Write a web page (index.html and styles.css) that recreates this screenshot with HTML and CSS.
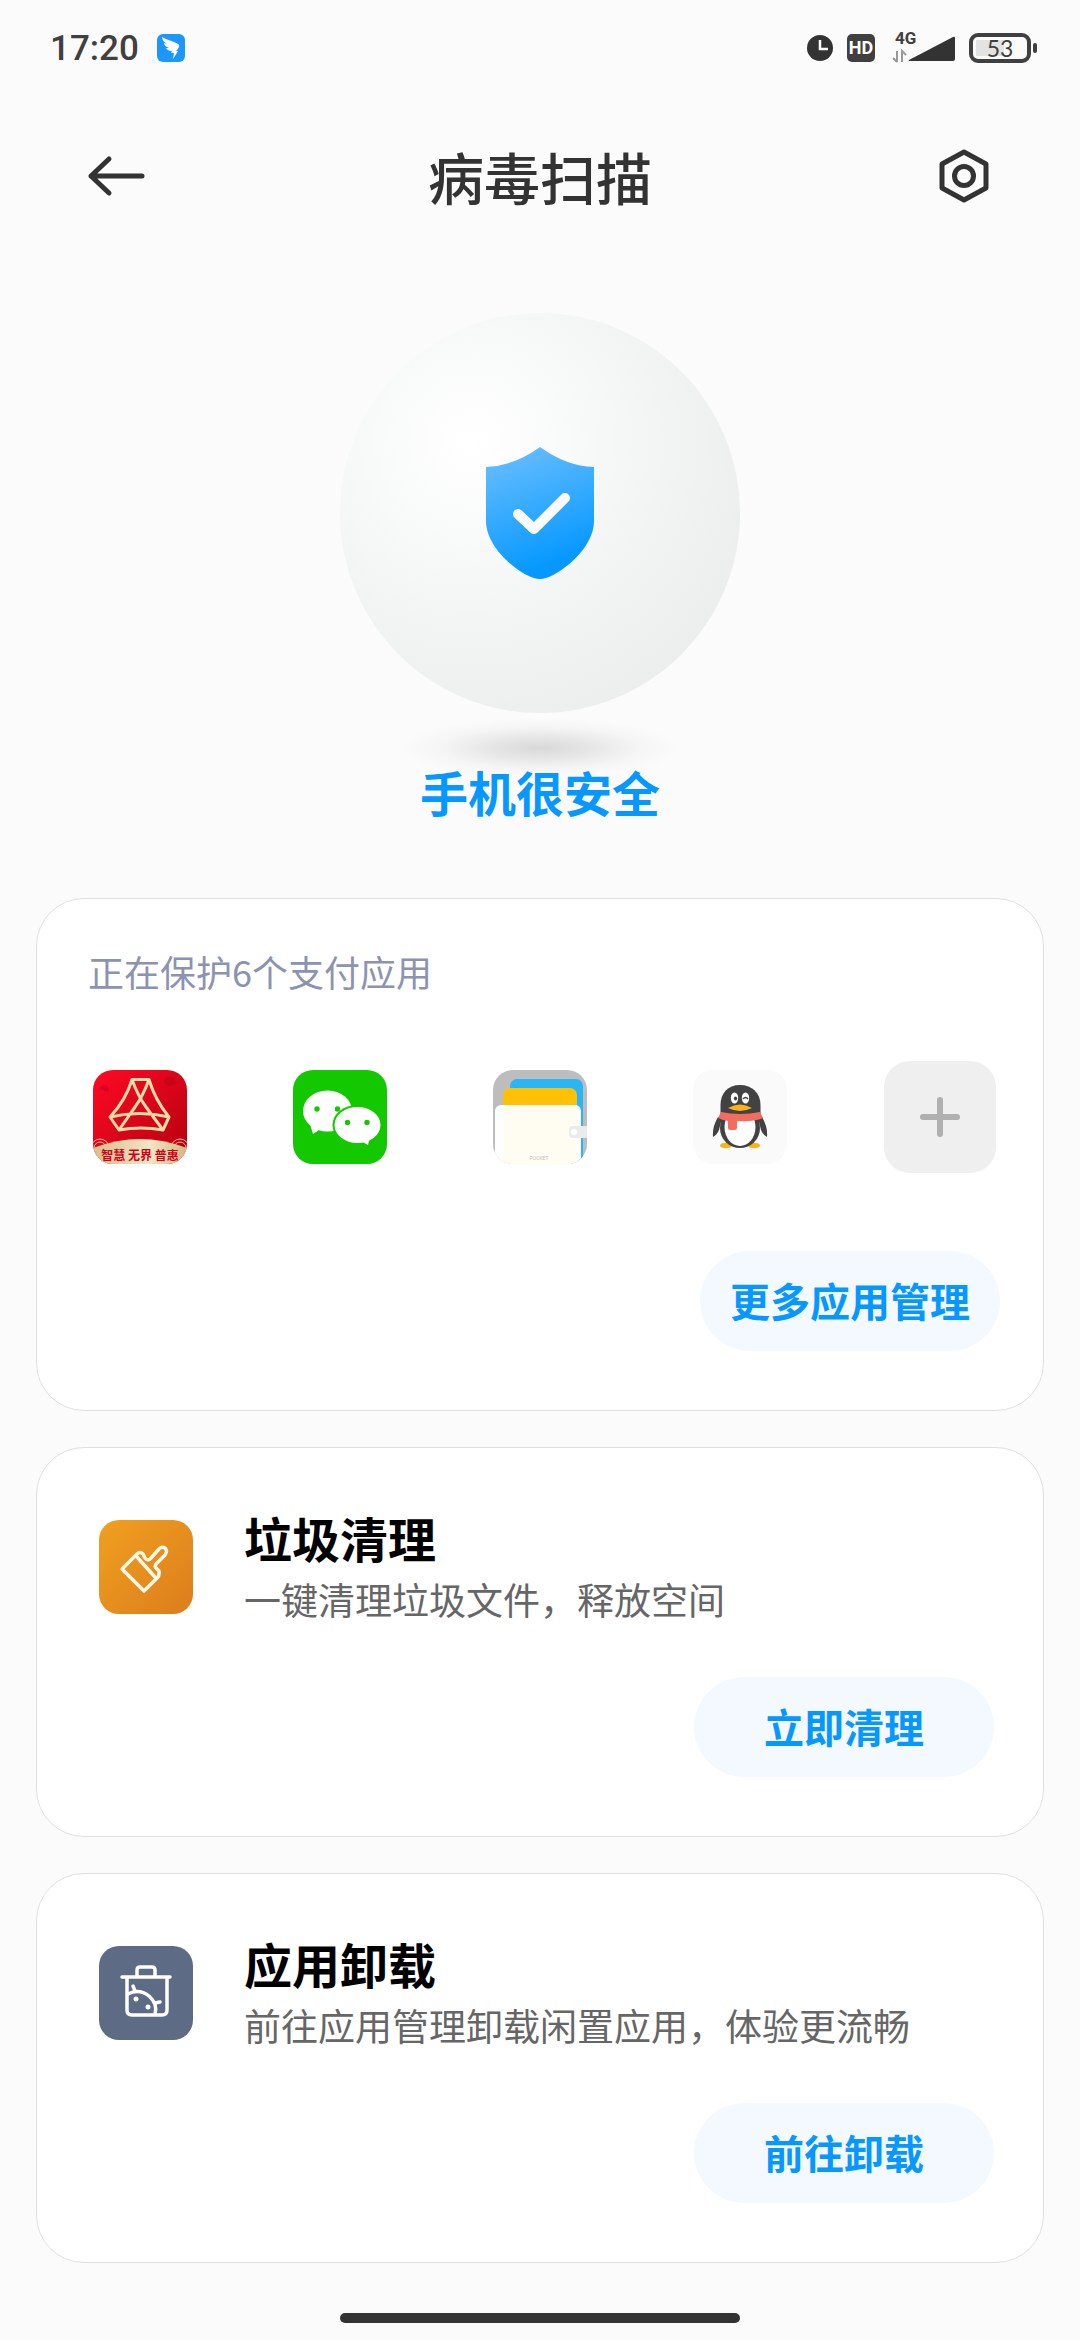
FILE: index.html
```
<!DOCTYPE html>
<html lang="zh-CN">
<head>
    <meta charset="utf-8">
    <meta name="viewport" content="width=device-width, initial-scale=1">
    <title>病毒扫描</title>
    <link rel="stylesheet" href="styles.css">
</head>
<body>
    <div class="statusbar">
        <div class="status-left">
            <span class="time">17:20</span>
            <svg width="28" height="28" viewBox="0 0 28 28">
                <rect width="28" height="28" rx="6" fill="#1c97fb"/>
                <path d="M5 3c5 3 11 4 16 7 2 1 1 3 0 5l-2 2h2l-5 8 1-6h-3l1-2c-3 0-5-1-6-3l3 0c-3-1-5-3-5-5l3 1C7 8 5 6 5 3z" fill="#fff"/>
            </svg>
        </div>
        <div class="status-right">
            <svg width="26" height="28" viewBox="0 0 26 28">
                <circle cx="13" cy="14" r="13" fill="#333"/>
                <path d="M13 6v9h8" fill="none" stroke="#fff" stroke-width="2.5"/>
            </svg>
            <span class="hd">HD</span>
            <div class="signal">
                <span class="net">4G</span>
                <svg width="64" height="32" viewBox="0 0 64 32">
                    <path d="M5 19v11M5 30l-4-4M10 30V19l4 4" fill="none" stroke="#999" stroke-width="2"/>
                    <path d="M17 28L61 5q2-1 2 1v21q0 2-2 2H17q-1 0 0-1z" fill="#333"/>
                </svg>
            </div>
            <div class="battery">53</div>
        </div>
    </div>

    <div class="header">
        <button class="icon-btn" aria-label="返回">
            <svg width="60" height="60" viewBox="0 0 60 60" fill="none" stroke="#333" stroke-width="5" stroke-linecap="round" stroke-linejoin="round">
                <path d="M56 30H5M23 13L5 30l18 17"/>
            </svg>
        </button>
        <h1>病毒扫描</h1>
        <button class="icon-btn" aria-label="设置">
            <svg width="60" height="60" viewBox="0 0 60 60" fill="none" stroke="#333" stroke-width="5" stroke-linejoin="round">
                <path d="M30 6l22 12v24L30 54 8 42V18z"/>
                <circle cx="30" cy="30" r="9.5"/>
            </svg>
        </button>
    </div>

    <div class="result">
        <div class="ball">
            <svg width="108" height="132" viewBox="0 0 108 132">
                <defs>
                    <linearGradient id="shield" x1="0.3" y1="0" x2="0.6" y2="1">
                        <stop offset="0" stop-color="#66bdff"/>
                        <stop offset="0.9" stop-color="#0698ff"/>
                    </linearGradient>
                </defs>
                <path d="M54 0Q80 19 108 20V74C108 100 78 125 60 131Q54 133 48 131C30 125 0 100 0 74V20Q28 19 54 0z" fill="url(#shield)"/>
                <path d="M32 67l16 15 31-31" fill="none" stroke="#fafafa" stroke-width="10" stroke-linecap="round" stroke-linejoin="round"/>
            </svg>
        </div>
        <div class="shadow"></div>
        <h2>手机很安全</h2>
    </div>

    <div class="card pay">
        <p class="protect">正在保护6个支付应用</p>
        <div class="apps">
            <svg class="app" viewBox="0 0 94 94">
                <defs>
                    <linearGradient id="red" x1="0" y1="0" x2="1" y2="1">
                        <stop offset="0" stop-color="#ff0a24"/>
                        <stop offset="1" stop-color="#b3000f"/>
                    </linearGradient>
                    <linearGradient id="gold" x1="0" y1="0" x2="1" y2="0">
                        <stop offset="0" stop-color="#d9bc8c"/>
                        <stop offset="0.6" stop-color="#f2e6c4"/>
                        <stop offset="1" stop-color="#d6b583"/>
                    </linearGradient>
                </defs>
                <rect width="94" height="94" fill="url(#red)"/>
                <path d="M6 19q4-6 8-3 3 2 1 6-5-2-9-3zM71 12q1-6 6-5 6 1 5 4l5 1q-3 3-7 3-6 3-9-3z" fill="#b5001c" opacity="0.4"/>
                <g fill="none" stroke="#ffdca8" stroke-width="3" stroke-linejoin="round">
                    <path d="M39 9.500H56Q62 30 76 47L70 60Q48 56 26 60L17 47Q33 30 39 9.500z"/>
                    <path d="M39 9.500Q45 26 53 37L70 60M56 9.500Q50 26 42 37L26 60M17 47Q47 40 76 47"/>
                </g>
                <g fill="none" stroke="#f3b9a4" stroke-width="1">
                    <circle cx="7" cy="78" r="9"/><circle cx="7" cy="78" r="6"/>
                    <circle cx="87" cy="78" r="9"/><circle cx="87" cy="78" r="6"/>
                </g>
                <path d="M0 78Q47 60 94 78V94H0z" fill="url(#gold)"/>
                <text class="slogan" x="47" y="90" text-anchor="middle">智慧 无界 普惠</text>
            </svg>
            <svg class="app" viewBox="0 0 94 94">
                <rect width="94" height="94" fill="#14c800"/>
                <path d="M17 54l3 10 9-6z" fill="#fff"/>
                <ellipse cx="34.500" cy="41" rx="24.500" ry="20.500" fill="#fff"/>
                <circle cx="24" cy="39" r="2.700" fill="#14c800"/>
                <circle cx="44.500" cy="39" r="2.700" fill="#14c800"/>
                <ellipse cx="64.500" cy="55" rx="25" ry="20" fill="#14c800"/>
                <path d="M68 71l7 4 2-9z" fill="#fff"/>
                <ellipse cx="64.500" cy="55" rx="23" ry="18" fill="#fff"/>
                <circle cx="54.500" cy="52.500" r="2.700" fill="#14c800"/>
                <circle cx="74" cy="52.500" r="2.700" fill="#14c800"/>
            </svg>
            <svg class="app" viewBox="0 0 94 94">
                <rect width="94" height="94" fill="#bdbdbd"/>
                <rect x="17" y="9" width="73" height="90" rx="7" fill="#29b6f6"/>
                <rect x="10" y="18" width="74" height="80" rx="7" fill="#ffc107"/>
                <rect x="2" y="35" width="86" height="64" rx="6" fill="#fdfefe"/>
                <rect x="10" y="35" width="74" height="64" fill="#fffdf1"/>
                <path d="M94 56H80q-4 0-4 4v4q0 4 4 4h14z" fill="#ebebeb"/>
                <circle cx="81" cy="62" r="3" fill="#fff"/>
                <text class="pocket" x="46" y="90" text-anchor="middle">POCKET</text>
            </svg>
            <svg class="app" viewBox="0 0 94 94">
                <rect width="94" height="94" fill="#fafafa"/>
                <ellipse cx="33" cy="75.500" rx="6" ry="2.700" fill="#fbb31a"/>
                <ellipse cx="61" cy="75.500" rx="6" ry="2.700" fill="#fbb31a"/>
                <path d="M25 47Q19 57 20 67 24 65 26 60L28 52H66L68 60Q70 65 74 67 75 57 69 47z" fill="#424242"/>
                <ellipse cx="47" cy="58" rx="20" ry="20" fill="#424242"/>
                <ellipse cx="47" cy="57" rx="15.500" ry="19" fill="#fff"/>
                <path d="M27.500 45V35C27.500 23 35 15 47 15S67.500 23 67.500 35V45z" fill="#424242"/>
                <ellipse cx="41.500" cy="28" rx="3.700" ry="5.500" fill="#fff"/>
                <ellipse cx="52.500" cy="28" rx="3.700" ry="5.500" fill="#fff"/>
                <ellipse cx="42.500" cy="28.500" rx="1.600" ry="2" fill="#424242"/>
                <path d="M50 29q2.500-3 5 0" fill="none" stroke="#424242" stroke-width="1.500"/>
                <path d="M35 38Q47 31 59 38 47 44 35 38z" fill="#fbb31a"/>
                <path d="M28 42Q47 46 67 42L70 48Q60 52 44 51V58Q44 60 42 60H37Q35 60 35 58V51Q29 50 25 48z" fill="#f36c60"/>
            </svg>
            <button class="add" aria-label="添加">
                <svg width="46" height="46" viewBox="0 0 46 46" stroke="#b0b0b0" stroke-width="6" stroke-linecap="round">
                    <path d="M23 6v34M6 23h34"/>
                </svg>
            </button>
        </div>
        <button class="btn">更多应用管理</button>
    </div>

    <div class="card tool">
        <div class="info">
            <svg class="app" viewBox="0 0 94 94">
                <defs>
                    <linearGradient id="orange" x1="0" y1="0" x2="1" y2="1">
                        <stop offset="0" stop-color="#f0a021"/>
                        <stop offset="1" stop-color="#dc7d1b"/>
                    </linearGradient>
                </defs>
                <rect width="94" height="94" fill="url(#orange)"/>
                <g fill="none" stroke="#fff8e6" stroke-width="3.500" stroke-linejoin="round" stroke-linecap="round">
                    <path d="M23 49L38 34Q41 31 44 34L46 38Q49 42 52 38L60 29Q63 26 66 28 69 31 66 35L57 44Q55 47 58 49 61 51 60 54 60 57 57 59L45 71z"/>
                    <path d="M37 36l19 21"/>
                </g>
            </svg>
            <div>
                <h3>垃圾清理</h3>
                <p>一键清理垃圾文件，释放空间</p>
            </div>
        </div>
        <button class="btn">立即清理</button>
    </div>

    <div class="card tool">
        <div class="info">
            <svg class="app" viewBox="0 0 94 94">
                <rect width="94" height="94" fill="#5e6b85"/>
                <g fill="none" stroke="#fff" stroke-width="3.500" stroke-linejoin="round" stroke-linecap="round">
                    <path d="M23 31H71M38 30V24q0-3 3-3H53q3 0 3 3V30"/>
                    <path d="M28 32V64q0 5 5 5H63q5 0 5-5V32"/>
                    <path d="M29 48Q40 42 50 50 59 58 56 68M36 45l-2-5M56 57l5-1"/>
                </g>
                <circle cx="37" cy="53" r="2.500" fill="#fff"/>
                <circle cx="49" cy="61" r="2.500" fill="#fff"/>
            </svg>
            <div>
                <h3>应用卸载</h3>
                <p>前往应用管理卸载闲置应用，体验更流畅</p>
            </div>
        </div>
        <button class="btn">前往卸载</button>
    </div>

    <div class="home-bar"></div>
</body>
</html>
```
FILE: styles.css
```
* {
    box-sizing: border-box;
}
body {
    margin: 0;
    min-height: 100vh;
    display: flex;
    flex-direction: column;
    background-color: #fbfbfb;
    font-family: "Noto Sans CJK SC", sans-serif;
    color: #333;
}
h1, h2, h3, p {
    margin: 0;
}
svg {
    display: block;
}
button {
    border: none;
    padding: 0;
    font-family: inherit;
    cursor: pointer;
}

/* status bar */
.statusbar {
    height: 96px;
    padding: 0 44px 0 50px;
    display: flex;
    align-items: center;
    justify-content: space-between;
}
.status-left, .status-right {
    display: flex;
    align-items: center;
}
.status-left {
    gap: 18px;
}
.time {
    font-family: Roboto, sans-serif;
    font-size: 35px;
    font-weight: 500;
    color: #404040;
}
.hd {
    width: 28px;
    height: 28px;
    margin-left: 14px;
    border-radius: 5px;
    background-color: #404040;
    color: #fff;
    font: bold 18px/28px Roboto, sans-serif;
    text-align: center;
}
.signal {
    position: relative;
    margin: 0 13px 0 17px;
}
.net {
    position: absolute;
    top: -2px;
    left: 3px;
    font: bold 17px/16px Roboto, sans-serif;
    color: #404040;
}
.battery {
    position: relative;
    width: 62px;
    height: 30px;
    margin-right: 5px;
    border: 4px solid #404040;
    border-radius: 9px;
    background: linear-gradient(#e3e3e3, #e3e3e3) 3px 3px / 28px 16px no-repeat;
    font: 23px/23px Lato, sans-serif;
    text-align: center;
    color: #404040;
}
.battery::after {
    content: "";
    position: absolute;
    top: 6px;
    right: -10px;
    width: 4px;
    height: 10px;
    border-radius: 2px;
    background-color: #404040;
}

/* title bar */
.header {
    height: 160px;
    padding: 0 86px;
    display: flex;
    align-items: center;
    justify-content: space-between;
}
.header h1 {
    font-size: 56px;
    font-weight: 500;
    line-height: 80px;
}
.icon-btn {
    background: none;
}

/* scan result */
.result {
    padding-top: 57px;
    display: flex;
    flex-direction: column;
    align-items: center;
}
.ball {
    width: 400px;
    height: 400px;
    border-radius: 50%;
    display: flex;
    align-items: center;
    justify-content: center;
    background: radial-gradient(circle 300px at 33% 32%, #fff, #f9fafa 30%, #f2f3f3 65%, #eceeee);
}
.shadow {
    width: 280px;
    height: 60px;
    margin-top: 5px;
    background: radial-gradient(closest-side, #d8d8d8, #e6e6e6 35%, #f5f5f5 70%, #fbfbfb);
}
.result h2 {
    font-size: 48px;
    line-height: 70px;
    margin-top: -22px;
    color: #0698ff;
}

/* cards */
.card {
    margin: 0 36px 36px;
    border: 1px solid #e0e0e0;
    border-radius: 48px;
    background-color: #fff;
    display: flex;
    flex-direction: column;
}
.app {
    width: 94px;
    height: 94px;
    border-radius: 20px;
    flex-shrink: 0;
}
.btn {
    width: 300px;
    height: 100px;
    border-radius: 50px;
    background-color: #f3f9ff;
    color: #0698ff;
    font-size: 40px;
    font-weight: 600;
    line-height: 56px;
    padding-bottom: 2px;
    align-self: flex-end;
}
.pay {
    margin-top: 72px;
    padding: 46px 3px 59px;
}
.protect {
    padding-left: 48px;
    font-size: 36px;
    line-height: 52px;
    color: #8c93b0;
}
.apps {
    margin: 64px 0 78px;
    display: grid;
    grid-template-columns: repeat(5, 1fr);
    align-items: center;
    justify-items: center;
}
.add {
    width: 112px;
    height: 112px;
    border-radius: 26px;
    background-color: #efefef;
    display: flex;
    align-items: center;
    justify-content: center;
}
.pay .btn {
    margin-right: 40px;
}
.slogan {
    font-size: 12px;
    font-weight: 700;
    fill: #d0021b;
}
.pocket {
    font: 5px Roboto, sans-serif;
    fill: #bbb;
}

.tool {
    padding: 57px 49px 59px 62px;
}
.info {
    display: flex;
    align-items: center;
    gap: 51px;
    margin-bottom: 48px;
}
.info h3 {
    font-size: 48px;
    line-height: 64px;
    color: #000;
}
.info p {
    font-size: 37px;
    line-height: 60px;
    color: #666;
}

.home-bar {
    width: 400px;
    height: 10px;
    margin: auto auto 17px;
    border-radius: 5px;
    background-color: #333;
}
```
